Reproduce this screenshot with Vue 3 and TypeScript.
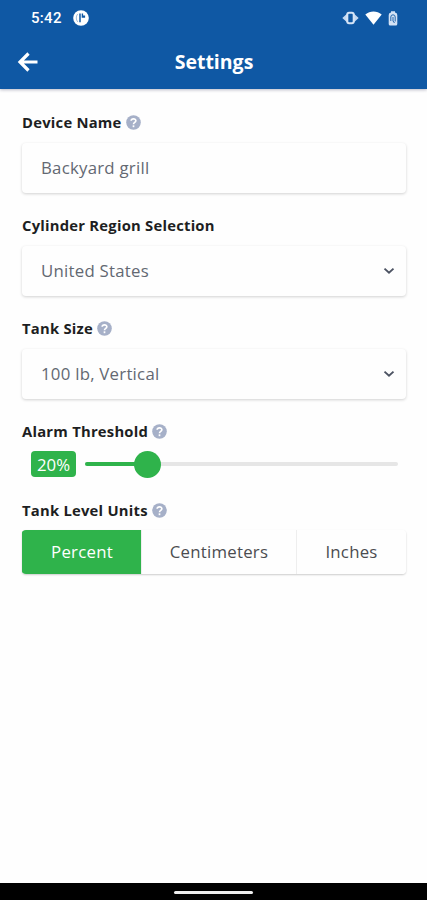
<script setup lang="ts">
import { ref } from 'vue'

const deviceName = ref('Backyard grill')
const region = ref('United States')
const tankSize = ref('100 lb, Vertical')
const threshold = ref(20)
const units = ['Percent', 'Centimeters', 'Inches']
const unit = ref('Percent')
</script>

<template>
  <div class="screen">
    <header class="top">
      <div class="status">
        <span class="time">5:42</span>
        <svg class="app-dot" viewBox="0 0 16 16">
          <circle cx="8" cy="8" r="7.800" fill="#fff" />
          <path d="M7 3.500v8.800" fill="none" stroke="#0f58a4" stroke-width="1.500" />
          <path d="M4.800 4C2.800 6 2.800 10 5 12" fill="none" stroke="#0f58a4" stroke-width=".4" />
          <path d="M8.700 3.500h1.400v2h2v2.300H8.700z" fill="#0f58a4" />
        </svg>
        <div class="status-icons">
          <svg class="vibrate" viewBox="0 0 17 14">
            <path d="M.3 7 5 2.800v8.400zM16.700 7 12 2.800v8.400z" fill="#c3d8f2" />
            <rect x="5.300" y="1.700" width="6.400" height="10.600" rx="1.800" fill="#0f58a4" stroke="#d5e4f7" stroke-width="2" />
          </svg>
          <svg class="wifi" viewBox="0 0 17 14">
            <path d="M.3 3.500C5 -.6 12 -.6 16.700 3.500L8.500 13.800z" fill="#fff" />
          </svg>
          <svg class="battery" viewBox="0 0 10 15">
            <path d="M3 1.500V.3h4v1.200q2.300.4 2.300 2.500v8.900q0 1.500-1.500 1.500H2.200q-1.500 0-1.500-1.500V4q0-2.100 2.300-2.500z" fill="#d3e2f5" />
            <path d="M2.800 10V6q0-2.200 2.200-2.200T7.200 6v4.500M5 6v4l1.500 2" fill="none" stroke="#0f58a4" stroke-width=".9" />
          </svg>
        </div>
      </div>
      <div class="titlebar">
        <svg class="back" viewBox="0 0 22 20">
          <path d="M20.500 10H3M11.500 1.500 3 10l8.500 8.500" fill="none" stroke="#fff" stroke-width="3.200" />
        </svg>
        <h1>Settings</h1>
      </div>
    </header>

    <main>
      <section class="field">
        <label><span>Device Name</span>
          <svg class="help" viewBox="0 0 16 16"><circle cx="8" cy="8" r="7.800" /><path d="M5.500 6.200C5.700 3.300 10.600 3.400 10.500 6.200 10.400 8 8 7.800 8 9.900" /><path d="M8 11v2" /></svg>
        </label>
        <div class="box"><span>{{ deviceName }}</span></div>
      </section>
      <section class="field">
        <label><span>Cylinder Region Selection</span></label>
        <div class="box">
          <span>{{ region }}</span>
          <svg class="chevron" viewBox="0 0 12 8"><path d="M1.500 1.600 6 5.700l4.500-4.100" /></svg>
        </div>
      </section>
      <section class="field">
        <label><span>Tank Size</span>
          <svg class="help" viewBox="0 0 16 16"><circle cx="8" cy="8" r="7.800" /><path d="M5.500 6.200C5.700 3.300 10.600 3.400 10.500 6.200 10.400 8 8 7.800 8 9.900" /><path d="M8 11v2" /></svg>
        </label>
        <div class="box">
          <span>{{ tankSize }}</span>
          <svg class="chevron" viewBox="0 0 12 8"><path d="M1.500 1.600 6 5.700l4.500-4.100" /></svg>
        </div>
      </section>
      <section class="alarm">
        <label><span>Alarm Threshold</span>
          <svg class="help" viewBox="0 0 16 16"><circle cx="8" cy="8" r="7.800" /><path d="M5.500 6.200C5.700 3.300 10.600 3.400 10.500 6.200 10.400 8 8 7.800 8 9.900" /><path d="M8 11v2" /></svg>
        </label>
        <div class="slider-row">
          <span class="badge">{{ threshold }}%</span>
          <div class="track">
            <div class="fill" :style="{ width: threshold + '%' }"></div>
            <div class="thumb" :style="{ left: threshold + '%' }"></div>
          </div>
        </div>
      </section>
      <section class="units">
        <label><span>Tank Level Units</span>
          <svg class="help" viewBox="0 0 16 16"><circle cx="8" cy="8" r="7.800" /><path d="M5.500 6.200C5.700 3.300 10.600 3.400 10.500 6.200 10.400 8 8 7.800 8 9.900" /><path d="M8 11v2" /></svg>
        </label>
        <div class="segments">
          <button v-for="u in units" :key="u" :class="{ active: u === unit }" @click="unit = u">{{ u }}</button>
        </div>
      </section>
    </main>

    <footer><span class="pill"></span></footer>
  </div>
</template>

<style>
body {
  margin: 0;
}
</style>

<style scoped>
.screen {
  width: 427px;
  height: 900px;
  display: flex;
  flex-direction: column;
  overflow: hidden;
  background: #fefefe;
  font-family: "Open Sans", "Noto Sans", sans-serif;
}
.top {
  height: 89px;
  flex: none;
  background: #0f58a4;
  color: #fff;
  box-shadow: 0 1px 3px rgba(30, 30, 70, 0.3);
}
.status {
  height: 36px;
  display: flex;
  align-items: center;
  padding: 0 29px 0 31px;
}
.time {
  width: 42px;
  font: 500 15px/36px Roboto, sans-serif;
  letter-spacing: 0.3px;
}
.app-dot {
  width: 16px;
  height: 16px;
}
.status-icons {
  margin-left: auto;
  display: flex;
  align-items: center;
  gap: 6px;
}
.vibrate {
  width: 17px;
  height: 14px;
}
.wifi {
  width: 17px;
  height: 14px;
}
.battery {
  width: 10px;
  height: 15px;
}
.titlebar {
  height: 52px;
  display: grid;
  grid-template-columns: 40px 1fr 40px;
  align-items: center;
}
.back {
  width: 22px;
  height: 20px;
  margin-left: 17px;
}
h1 {
  margin: 0;
  padding-left: 1px;
  text-align: center;
  font-size: 19.5px;
  line-height: 26px;
  font-weight: 700;
}
main {
  flex: 1;
  padding: 23px 21px 0 22px;
}
label {
  display: flex;
  align-items: center;
  gap: 4px;
  height: 20px;
  font-size: 14.8px;
  line-height: 20px;
  font-weight: 700;
  letter-spacing: 0.23px;
  color: #1d1e22;
  white-space: nowrap;
}
label span {
  padding-bottom: 1px;
}
.help {
  width: 15px;
  height: 15px;
}
.help circle {
  fill: #a6b0c8;
}
.help path {
  fill: none;
  stroke: #fff;
  stroke-width: 1.8;
}
.field {
  height: 103px;
}
.box {
  height: 50px;
  margin-top: 11px;
  box-sizing: border-box;
  display: flex;
  align-items: center;
  justify-content: space-between;
  padding: 0 11px 0 19px;
  border-radius: 4px;
  background: #fefefe;
  box-shadow: 0 1px 3px rgba(0, 0, 0, 0.18);
  font-size: 16.8px;
  line-height: 22px;
  letter-spacing: 0.25px;
  color: #636872;
}
.chevron {
  width: 12px;
  height: 8px;
}
.chevron path {
  fill: none;
  stroke: #4c5362;
  stroke-width: 1.9;
}
.alarm {
  height: 79px;
}
.slider-row {
  display: flex;
  align-items: center;
  height: 26px;
  margin-top: 10px;
  padding: 0 8px 0 9px;
}
.badge {
  width: 45px;
  height: 26px;
  border-radius: 4px;
  background: #2fb34b;
  color: #fff;
  text-align: center;
  font-size: 16.8px;
  line-height: 27px;
}
.track {
  position: relative;
  flex: 1;
  height: 4px;
  margin-left: 9px;
  border-radius: 2px;
  background: #e6e6e6;
}
.fill {
  height: 4px;
  border-radius: 2px;
  background: #2fb34b;
}
.thumb {
  position: absolute;
  top: -11px;
  width: 27px;
  height: 27px;
  margin-left: -14px;
  border-radius: 50%;
  background: #2fb34b;
}
.segments {
  display: grid;
  grid-template-columns: 119px 155px 110px;
  height: 44px;
  margin-top: 10px;
  border-radius: 4px;
  overflow: hidden;
  box-shadow: 0 1px 2px rgba(0, 0, 0, 0.2);
}
.segments button {
  border: 0;
  border-left: 1px solid #eeeeee;
  padding: 0 0 1px;
  background: #fefefe;
  color: #4b4c50;
  font: 400 16.8px/42px "Open Sans", sans-serif;
  letter-spacing: 0.25px;
}
.segments button.active {
  border-color: #2fb34b;
  background: #2fb34b;
  color: #fff;
}
footer {
  height: 17px;
  flex: none;
  display: flex;
  align-items: center;
  justify-content: center;
  background: #000;
}
.pill {
  width: 79px;
  height: 3px;
  margin-top: 1px;
  border-radius: 2px;
  background: #eee;
}
</style>
